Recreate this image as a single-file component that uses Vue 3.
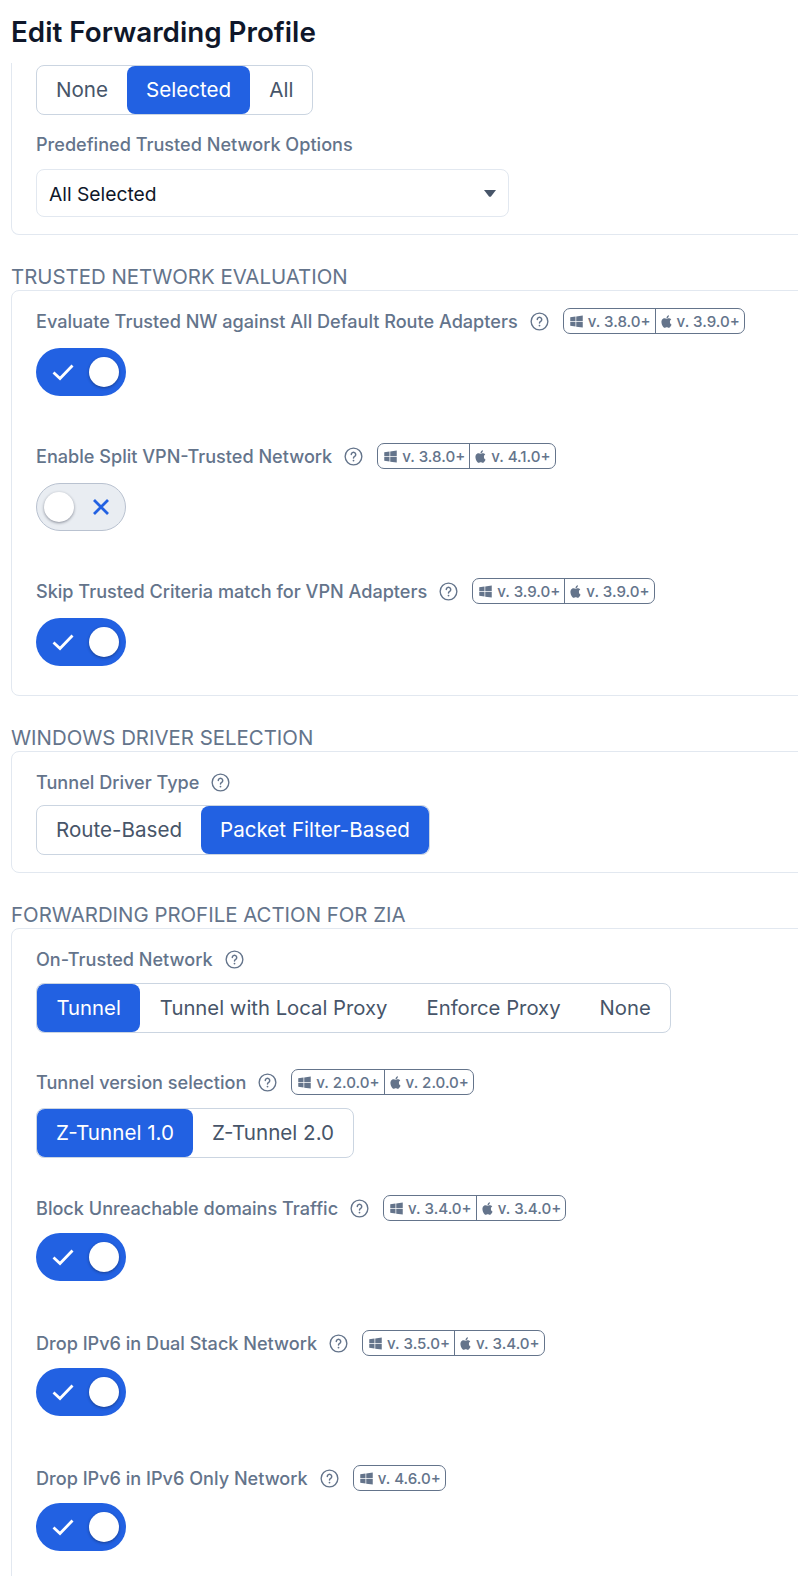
<script setup>
const windowsPath = 'M2 5.2 10.4 4V11.4H2ZM11.6 3.8 22 2.3V11.4H11.6ZM2 12.6H10.4V20L2 18.8ZM11.6 12.6H22V21.7L11.6 20.2Z';
const applePath = 'M18.71,19.5C17.88,20.74 17,21.95 15.66,21.97C14.32,22 13.89,21.18 12.37,21.18C10.84,21.18 10.37,21.95 9.1,22C7.79,22.05 6.8,20.68 5.96,19.47C4.25,17 2.94,12.45 4.7,9.39C5.57,7.87 7.13,6.91 8.82,6.88C10.1,6.86 11.32,7.75 12.11,7.75C12.89,7.75 14.37,6.68 15.92,6.84C16.57,6.87 18.39,7.1 19.56,8.82C19.47,8.88 17.39,10.1 17.41,12.63C17.44,15.65 20.06,16.66 20.09,16.67C20.06,16.74 19.67,18.11 18.71,19.5M13,3.5C13.73,2.67 14.94,2.04 15.94,2C16.07,3.17 15.6,4.35 14.9,5.19C14.21,6.04 13.07,6.7 11.95,6.61C11.8,5.46 12.36,4.26 13,3.5Z';

const trustedRows = [
  { label: 'Evaluate Trusted NW against All Default Route Adapters', win: '3.8.0', mac: '3.9.0', on: true },
  { label: 'Enable Split VPN-Trusted Network', win: '3.8.0', mac: '4.1.0', on: false },
  { label: 'Skip Trusted Criteria match for VPN Adapters', win: '3.9.0', mac: '3.9.0', on: true },
];

const ziaRows = [
  { label: 'Block Unreachable domains Traffic', win: '3.4.0', mac: '3.4.0', on: true },
  { label: 'Drop IPv6 in Dual Stack Network', win: '3.5.0', mac: '3.4.0', on: true },
  { label: 'Drop IPv6 in IPv6 Only Network', win: '4.6.0', on: true },
];

function segments(names, active) {
  return names.map(name => ({ name, active: name === active }));
}

const trustedOptions = segments(['None', 'Selected', 'All'], 'Selected');
const driverOptions = segments(['Route-Based', 'Packet Filter-Based'], 'Packet Filter-Based');
const actionOptions = segments(['Tunnel', 'Tunnel with Local Proxy', 'Enforce Proxy', 'None'], 'Tunnel');
const tunnelOptions = segments(['Z-Tunnel 1.0', 'Z-Tunnel 2.0'], 'Z-Tunnel 1.0');
</script>

<template>
  <main class="page">
    <header class="page-header">
      <h1 class="page-title">Edit Forwarding Profile</h1>
    </header>

    <section class="card card-first">
      <div class="segment">
        <button v-for="o in trustedOptions" :key="o.name" class="segment-btn" :class="{ active: o.active }">{{ o.name }}</button>
      </div>
      <label class="row-label first-select-label">Predefined Trusted Network Options</label>
      <div class="select">
        <span>All Selected</span>
        <svg class="select-arrow" viewBox="0 0 12 7" width="12" height="7"><path d="M0 0H12L7 6.4Q6 7.2 5 6.4Z" fill="#475569" /></svg>
      </div>
    </section>

    <h2 class="section-title">Trusted Network Evaluation</h2>
    <section class="card card-rows">
      <div v-for="row in trustedRows" :key="row.label" class="toggle-row">
        <div class="label-line">
          <span class="row-label">{{ row.label }}</span>
          <svg class="help" viewBox="0 0 18 18" width="19" height="19">
            <circle cx="9" cy="9" r="7.9" fill="none" stroke="#64748b" stroke-width="1.3" />
            <path d="M6.9 7.1a2.1 2.1 0 1 1 3.2 1.8c-.7.4-1.1.8-1.1 1.6" fill="none" stroke="#64748b" stroke-width="1.4" stroke-linecap="round" />
            <circle cx="9" cy="12.9" r=".85" fill="#64748b" />
          </svg>
          <div class="versions">
            <span class="version">
              <svg viewBox="0 0 24 24" width="15" height="15"><path :d="windowsPath" fill="#64748b" /></svg>v. {{ row.win }}+
            </span>
            <span v-if="row.mac" class="version">
              <svg viewBox="0 0 24 24" width="15" height="15"><path :d="applePath" fill="#64748b" /></svg>v. {{ row.mac }}+
            </span>
          </div>
        </div>
        <div class="toggle" :class="row.on ? 'on' : 'off'">
          <svg v-if="row.on" class="toggle-icon" viewBox="0 0 24 24" width="24" height="24"><path d="M2.5 12.5 9 18.5 21.5 5.5" fill="none" stroke="#fff" stroke-width="2.8" /></svg>
          <span class="knob"></span>
          <svg v-if="!row.on" class="toggle-icon" viewBox="0 0 24 24" width="24" height="24"><path d="M5 5 19 19M19 5 5 19" fill="none" stroke="#2261e2" stroke-width="2.8" /></svg>
        </div>
      </div>
    </section>

    <h2 class="section-title">Windows Driver Selection</h2>
    <section class="card card-driver">
      <div class="label-line label-gap">
        <span class="row-label">Tunnel Driver Type</span>
        <svg class="help" viewBox="0 0 18 18" width="19" height="19">
          <circle cx="9" cy="9" r="7.9" fill="none" stroke="#64748b" stroke-width="1.3" />
          <path d="M6.9 7.1a2.1 2.1 0 1 1 3.2 1.8c-.7.4-1.1.8-1.1 1.6" fill="none" stroke="#64748b" stroke-width="1.4" stroke-linecap="round" />
          <circle cx="9" cy="12.9" r=".85" fill="#64748b" />
        </svg>
      </div>
      <div class="segment">
        <button v-for="o in driverOptions" :key="o.name" class="segment-btn" :class="{ active: o.active }">{{ o.name }}</button>
      </div>
    </section>

    <h2 class="section-title">Forwarding Profile Action for ZIA</h2>
    <section class="card card-rows card-zia">
      <div class="label-line label-gap">
        <span class="row-label">On-Trusted Network</span>
        <svg class="help" viewBox="0 0 18 18" width="19" height="19">
          <circle cx="9" cy="9" r="7.9" fill="none" stroke="#64748b" stroke-width="1.3" />
          <path d="M6.9 7.1a2.1 2.1 0 1 1 3.2 1.8c-.7.4-1.1.8-1.1 1.6" fill="none" stroke="#64748b" stroke-width="1.4" stroke-linecap="round" />
          <circle cx="9" cy="12.9" r=".85" fill="#64748b" />
        </svg>
      </div>
      <div class="segment action-segment">
        <button v-for="o in actionOptions" :key="o.name" class="segment-btn" :class="{ active: o.active }">{{ o.name }}</button>
      </div>

      <div class="label-line tunnel-line">
        <span class="row-label">Tunnel version selection</span>
        <svg class="help" viewBox="0 0 18 18" width="19" height="19">
          <circle cx="9" cy="9" r="7.9" fill="none" stroke="#64748b" stroke-width="1.3" />
          <path d="M6.9 7.1a2.1 2.1 0 1 1 3.2 1.8c-.7.4-1.1.8-1.1 1.6" fill="none" stroke="#64748b" stroke-width="1.4" stroke-linecap="round" />
          <circle cx="9" cy="12.9" r=".85" fill="#64748b" />
        </svg>
        <div class="versions">
          <span class="version">
            <svg viewBox="0 0 24 24" width="15" height="15"><path :d="windowsPath" fill="#64748b" /></svg>v. 2.0.0+
          </span>
          <span class="version">
            <svg viewBox="0 0 24 24" width="15" height="15"><path :d="applePath" fill="#64748b" /></svg>v. 2.0.0+
          </span>
        </div>
      </div>
      <div class="segment tunnel-segment">
        <button v-for="o in tunnelOptions" :key="o.name" class="segment-btn" :class="{ active: o.active }">{{ o.name }}</button>
      </div>

      <div v-for="row in ziaRows" :key="row.label" class="toggle-row">
        <div class="label-line">
          <span class="row-label">{{ row.label }}</span>
          <svg class="help" viewBox="0 0 18 18" width="19" height="19">
            <circle cx="9" cy="9" r="7.9" fill="none" stroke="#64748b" stroke-width="1.3" />
            <path d="M6.9 7.1a2.1 2.1 0 1 1 3.2 1.8c-.7.4-1.1.8-1.1 1.6" fill="none" stroke="#64748b" stroke-width="1.4" stroke-linecap="round" />
            <circle cx="9" cy="12.9" r=".85" fill="#64748b" />
          </svg>
          <div class="versions">
            <span class="version">
              <svg viewBox="0 0 24 24" width="15" height="15"><path :d="windowsPath" fill="#64748b" /></svg>v. {{ row.win }}+
            </span>
            <span v-if="row.mac" class="version">
              <svg viewBox="0 0 24 24" width="15" height="15"><path :d="applePath" fill="#64748b" /></svg>v. {{ row.mac }}+
            </span>
          </div>
        </div>
        <div class="toggle on">
          <svg class="toggle-icon" viewBox="0 0 24 24" width="24" height="24"><path d="M2.5 12.5 9 18.5 21.5 5.5" fill="none" stroke="#fff" stroke-width="2.8" /></svg>
          <span class="knob"></span>
        </div>
      </div>
    </section>
  </main>
</template>

<style>
html, body {
  background: #fff;
  overflow: hidden;
}
</style>

<style scoped>
.page {
  width: 798px;
  height: 1576px;
  overflow: hidden;
  padding-left: 11px;
  box-sizing: border-box;
  font-family: Inter, "Liberation Sans", sans-serif;
}

.page-header {
  height: 63px;
  display: flex;
  align-items: center;
}

.page-title {
  margin: 0;
  font-size: 27.8px;
  font-weight: 600;
  color: #0f172a;
}

.card {
  width: 820px;
  box-sizing: border-box;
  border: 1px solid #e2e8f0;
  border-radius: 8px;
  padding: 17px 24px 0;
}

.card-first {
  height: 172px;
  padding-top: 2px;
  border-top: 0;
  border-top-left-radius: 0;
  border-top-right-radius: 0;
}

.card-driver {
  height: 122px;
}

.section-title {
  margin: 29px 0 0;
  height: 26px;
  line-height: 26px;
  font-size: 20.4px;
  font-weight: 400;
  color: #64748b;
  text-transform: uppercase;
}

.row-label {
  font-size: 18.1px;
  font-weight: 500;
  color: #64748b;
}

.first-select-label {
  display: block;
  margin-top: 18px;
  line-height: 22px;
}

.label-line {
  display: flex;
  align-items: center;
  height: 26px;
}

.label-gap {
  margin-bottom: 10px;
}

.card-zia .label-gap {
  margin-bottom: 11px;
}

.help {
  margin-left: 12px;
  flex: none;
}

.versions {
  display: flex;
  margin-left: 14px;
  height: 26px;
  border: 1px solid #64748b;
  border-radius: 7px;
  box-sizing: border-box;
}

.version {
  display: flex;
  align-items: center;
  gap: 4px;
  padding: 0 4px 0 5px;
  font-size: 15.1px;
  font-weight: 500;
  color: #64748b;
  white-space: nowrap;
}

.version + .version {
  gap: 3px;
  padding-left: 3px;
  border-left: 1.5px solid #64748b;
}

.segment {
  display: inline-flex;
  border: 1px solid #cbd5e1;
  border-radius: 8px;
  height: 50px;
  box-sizing: border-box;
  vertical-align: top;
}

.segment-btn {
  border: 0;
  background: none;
  padding: 0 19px 2px;
  font-family: inherit;
  font-size: 20.6px;
  font-weight: 400;
  color: #475569;
  border-radius: 8px;
  height: 48px;
}

.segment-btn.active {
  background: #2261e2;
  color: #fff;
}

.action-segment .segment-btn {
  padding: 0 19.5px 2px;
  font-size: 20.3px;
}

.select {
  display: flex;
  align-items: center;
  justify-content: space-between;
  width: 473px;
  height: 48px;
  margin-top: 14px;
  padding: 0 12px;
  box-sizing: border-box;
  border: 1px solid #e2e8f0;
  border-radius: 8px;
  font-size: 19.25px;
  color: #0f172a;
}

.select span {
  padding-top: 1px;
}

.tunnel-line {
  margin-top: 36px;
  margin-bottom: 13px;
}

.tunnel-segment {
  margin-bottom: 37px;
}

.toggle-row {
  padding-bottom: 47px;
}

.toggle-row:last-child {
  padding-bottom: 29px;
}

.toggle {
  display: flex;
  align-items: center;
  justify-content: space-between;
  width: 90px;
  height: 48px;
  margin-top: 14px;
  padding: 0 7px 0 15px;
  box-sizing: border-box;
  border-radius: 24px;
}

.card-zia .toggle {
  margin-top: 12px;
}

.card-zia .toggle-row {
  padding-bottom: 49px;
}

.toggle.on {
  background: #2261e2;
}

.toggle.off {
  background: #e9edf2;
  border: 1px solid #b9c2d0;
  padding: 0 12px 0 7px;
}

.knob {
  width: 30px;
  height: 30px;
  border-radius: 50%;
  background: #fff;
  box-shadow: 0 1px 3px rgba(15, 23, 42, 0.45);
}
</style>
